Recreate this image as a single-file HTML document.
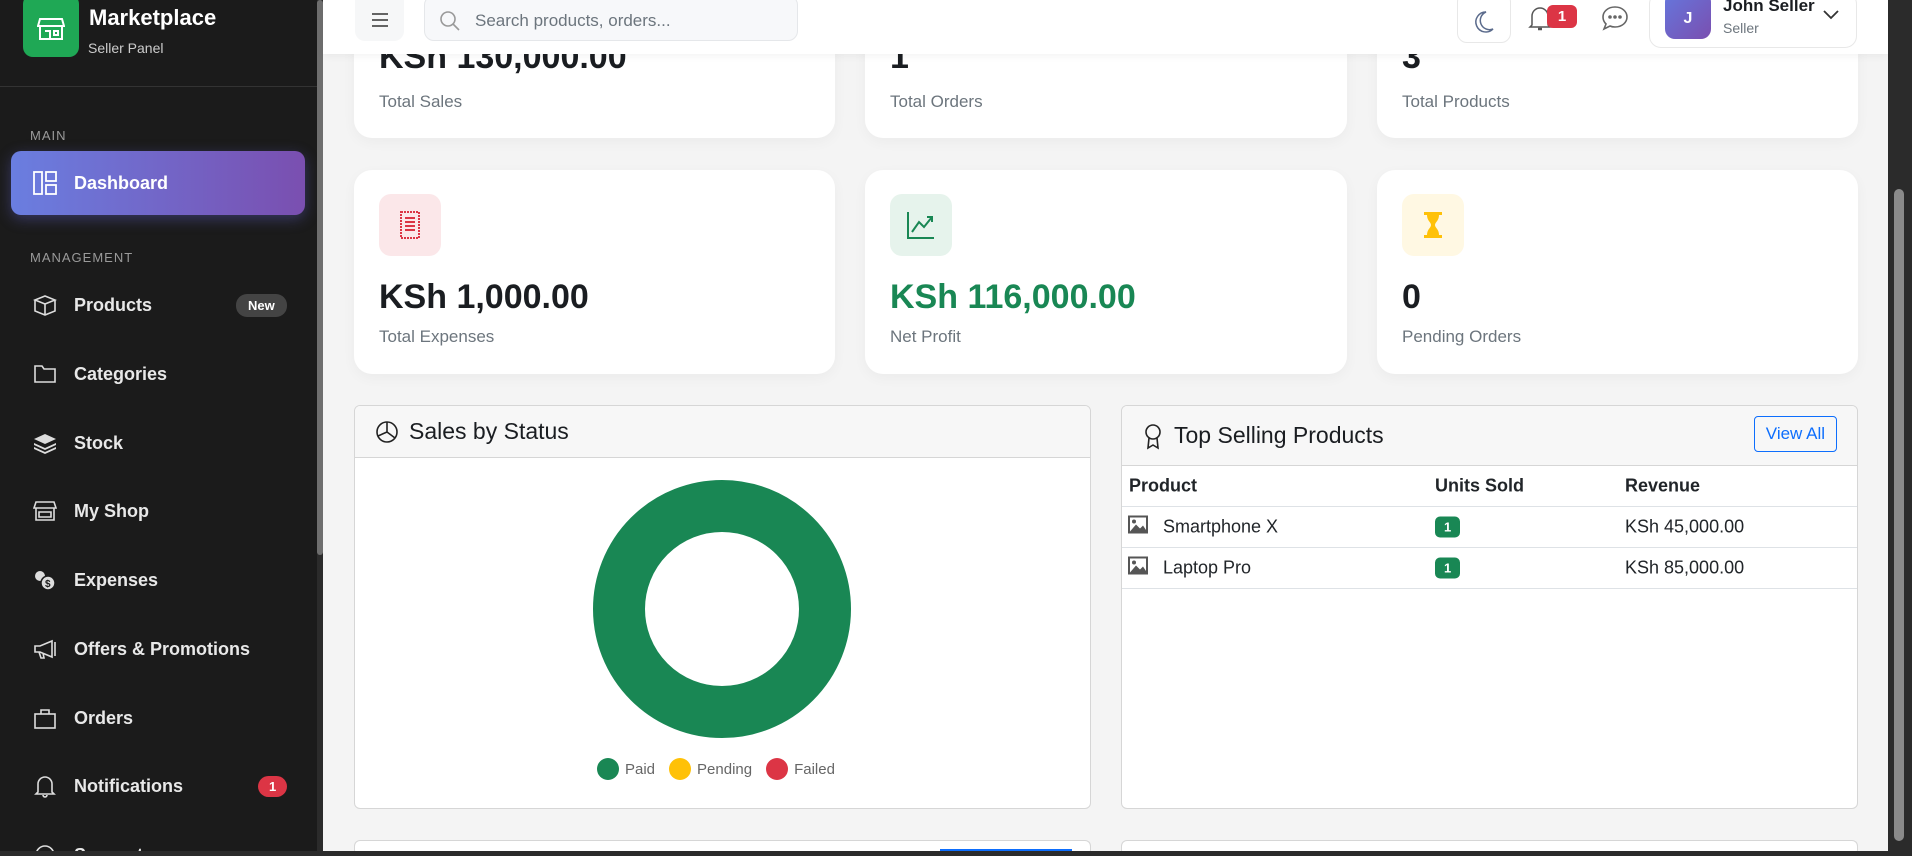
<!DOCTYPE html>
<html style="width:1912px;height:856px;overflow:hidden"><head><meta charset="utf-8"><style>
*{box-sizing:border-box;margin:0;padding:0}
body{width:1912px;height:856px;overflow:hidden;background:#f4f4f4;font-family:"Liberation Sans",sans-serif;position:relative;color:#212529}
.abs{position:absolute}
.sb{left:0;top:0;width:317px;height:856px;background:#1b1b1b;color:#fff;overflow:hidden}
.sbs{left:317px;top:0;width:6px;height:856px;background:#2b2b2b}
.sbs i{position:absolute;left:0;top:0;width:6px;height:555px;background:#6e6e6e;border-radius:3px}
.nav{position:absolute;left:0;width:317px;height:40px;display:flex;align-items:center;font-size:18px;font-weight:bold;color:#e8e8e8}
.nav svg{position:absolute;left:33px}
.nav span.t{position:absolute;left:74px}
.sec{position:absolute;left:30px;font-size:13px;letter-spacing:1px;color:#9a9a9a}
.hdr{left:323px;top:0;width:1565px;height:54px;background:#fff;box-shadow:0 2px 8px rgba(0,0,0,.05)}
.card{position:absolute;background:#fff;border-radius:18px;box-shadow:0 4px 14px rgba(0,0,0,.04)}
.val{position:absolute;left:25px;font-size:34px;font-weight:bold;color:#1a1d21}
.lbl{position:absolute;left:25px;font-size:17px;color:#6c757d}
.ib{position:absolute;left:25px;top:24px;width:62px;height:62px;border-radius:12px;display:flex;align-items:center;justify-content:center}
.panel{position:absolute;background:#fff;border:1px solid #d6d6d6;border-radius:6px;overflow:hidden}
.ph{background:#f7f7f7;border-bottom:1px solid #d6d6d6;font-size:23px;display:flex;align-items:center;padding-left:20px;color:#1a1d21}
.row{position:absolute;left:0;width:100%;border-bottom:1px solid #dee2e6;font-size:18px}
.row span{position:absolute;top:50%;transform:translateY(-50%)}
.bd{background:#198754;color:#fff;font-size:13px;font-weight:bold;padding:3px 9px;border-radius:5px}
#wrap{position:absolute;left:0;top:0;width:1912px;height:856px;overflow:hidden}
</style></head><body><div id="wrap">
<div class="abs sb">
 <div class="abs" style="left:23px;top:-6px;width:56px;height:63px;background:#1fa855;border-radius:10px;display:flex;align-items:center;justify-content:center;padding-top:6px">
  <svg width="28" height="24" viewBox="0 0 28 24" fill="none" stroke="#fff" stroke-width="2"><path d="M3 2h22l2 7H1z"/><path d="M3 9v13h22V9M3 22h22M8 14h5v8M17 14h4v4h-4z"/></svg>
 </div>
 <div class="abs" style="left:89px;top:5px;font-size:22px;font-weight:bold">Marketplace</div>
 <div class="abs" style="left:88px;top:40px;font-size:14px;color:#ccc">Seller Panel</div>
 <div class="abs" style="left:0;top:86px;width:317px;height:1px;background:#333"></div>
 <div class="sec" style="top:128px">MAIN</div>
 <div class="abs" style="left:11px;top:151px;width:294px;height:64px;border-radius:10px;background:linear-gradient(90deg,#6a7ee0,#7a4fb0);box-shadow:0 4px 14px rgba(110,110,230,.35)"></div>
 <div class="nav" style="top:163px;color:#fff"><svg width="24" height="24" viewBox="0 0 24 24" fill="none" stroke="#fff" stroke-width="1.8"><rect x="1" y="1" width="8" height="22"/><rect x="13" y="1" width="10" height="9"/><rect x="13" y="14" width="10" height="9"/></svg><span class="t">Dashboard</span></div>
 <div class="sec" style="top:250px">MANAGEMENT</div>
 <div class="nav" style="top:285px"><svg width="24" height="22" viewBox="0 0 24 22" fill="none" stroke="#ddd" stroke-width="1.6"><path d="M2 6l10-4 10 4-10 4zM2 6v11l10 4 10-4V6M12 10v11"/></svg><span class="t">Products</span><span style="position:absolute;left:236px;background:#444;color:#fff;font-size:13px;padding:4px 12px;border-radius:11px">New</span></div>
 <div class="nav" style="top:354px"><svg width="24" height="22" viewBox="0 0 24 22" fill="none" stroke="#ddd" stroke-width="1.6"><path d="M2 3h7l2 3h11v13H2z"/></svg><span class="t">Categories</span></div>
 <div class="nav" style="top:423px"><svg width="24" height="22" viewBox="0 0 24 22" fill="#ddd"><path d="M12 2l11 5-11 5L1 7z"/><path d="M1 11l11 5 11-5v2l-11 5-11-5z" /><path d="M1 15l11 5 11-5v2l-11 5-11-5z"/></svg><span class="t">Stock</span></div>
 <div class="nav" style="top:491px"><svg width="24" height="22" viewBox="0 0 24 22" fill="none" stroke="#ddd" stroke-width="1.6"><path d="M3 2h18l2 6H1zM3 8v12h18V8M6 12h12v5H6z"/></svg><span class="t">My Shop</span></div>
 <div class="nav" style="top:560px"><svg width="24" height="22" viewBox="0 0 24 22"><circle cx="7" cy="7" r="5" fill="#ddd"/><circle cx="15" cy="14" r="7" fill="#ddd" stroke="#1b1b1b" stroke-width="1.5"/><text x="12" y="18" font-size="10" fill="#1b1b1b">$</text></svg><span class="t">Expenses</span></div>
 <div class="nav" style="top:629px"><svg width="24" height="22" viewBox="0 0 24 22" fill="none" stroke="#ddd" stroke-width="1.6"><path d="M2 8h5l12-5v16L7 14H2zM6 14l2 6h3l-1-5M22 4v14"/></svg><span class="t">Offers &amp; Promotions</span></div>
 <div class="nav" style="top:698px"><svg width="24" height="22" viewBox="0 0 24 22" fill="none" stroke="#ddd" stroke-width="1.6"><rect x="2" y="7" width="20" height="14"/><path d="M8 7V3h8v4"/></svg><span class="t">Orders</span></div>
 <div class="nav" style="top:766px"><svg width="24" height="24" viewBox="0 0 24 24" fill="none" stroke="#ddd" stroke-width="1.6"><path d="M5 18V10a7 7 0 0114 0v8l2 2H3zM10 21a2 2 0 004 0"/></svg><span class="t">Notifications</span><span style="position:absolute;left:258px;background:#dc3545;color:#fff;font-size:13px;padding:3px 11px;border-radius:11px">1</span></div>
 <div class="nav" style="top:835px"><svg width="24" height="24" viewBox="0 0 24 24" fill="none" stroke="#ddd" stroke-width="1.6"><circle cx="12" cy="12" r="9"/></svg><span class="t">Support</span></div>
</div>
<div class="abs sbs"><i></i></div>

<div class="card" style="left:354px;top:-66px;width:481px;height:204px"><div class="val" style="top:104px">KSh 130,000.00</div><div class="lbl" style="top:158px">Total Sales</div></div>
<div class="card" style="left:865px;top:-66px;width:482px;height:204px"><div class="val" style="top:104px">1</div><div class="lbl" style="top:158px">Total Orders</div></div>
<div class="card" style="left:1377px;top:-66px;width:481px;height:204px"><div class="val" style="top:104px">3</div><div class="lbl" style="top:158px">Total Products</div></div>

<div class="card" style="left:354px;top:170px;width:481px;height:204px"><div class="ib" style="background:#fbe7e9"><svg width="24" height="30" viewBox="0 0 24 30" fill="none" stroke="#dc3545" stroke-width="2"><path d="M3 2h18v26H3z" stroke-dasharray="2 1"/><path d="M7 8h10M7 12h10M7 16h10M7 20h10"/></svg></div><div class="val" style="top:108px">KSh 1,000.00</div><div class="lbl" style="top:157px">Total Expenses</div></div>
<div class="card" style="left:865px;top:170px;width:482px;height:204px"><div class="ib" style="background:#e6f3ec"><svg width="30" height="30" viewBox="0 0 30 30" fill="none" stroke="#198754" stroke-width="2"><path d="M2 2v26h26"/><path d="M6 22l7-10 5 5 8-10M21 7h5v5"/></svg></div><div class="val" style="top:108px;color:#198754">KSh 116,000.00</div><div class="lbl" style="top:157px">Net Profit</div></div>
<div class="card" style="left:1377px;top:170px;width:481px;height:204px"><div class="ib" style="background:#fff8e3"><svg width="20" height="26" viewBox="0 0 20 26" fill="#ffc107"><rect x="1" y="0" width="18" height="3"/><rect x="1" y="23" width="18" height="3"/><path d="M4 3h12c0 6-4 7-4 10s4 4 4 10H4c0-6 4-7 4-10S4 9 4 3z"/></svg></div><div class="val" style="top:108px">0</div><div class="lbl" style="top:157px">Pending Orders</div></div>

<div class="panel" style="left:354px;top:405px;width:737px;height:404px">
 <div class="ph" style="height:52px"><svg width="24" height="24" viewBox="0 0 24 24" fill="none" stroke="#222" stroke-width="1.6" style="margin-right:10px"><circle cx="12" cy="12" r="10"/><path d="M12 2v10l8 6M12 12l-9 4"/></svg>Sales by Status</div>
 <svg class="abs" style="left:232px;top:68px" width="270" height="270"><circle cx="135" cy="135" r="103" fill="none" stroke="#198754" stroke-width="52"/></svg>
 <div class="abs" style="left:242px;top:352px;font-size:15px;color:#666;display:flex;align-items:center">
  <i style="width:22px;height:22px;border-radius:50%;background:#198754;margin-right:6px"></i>Paid
  <i style="width:22px;height:22px;border-radius:50%;background:#ffc107;margin:0 6px 0 14px"></i>Pending
  <i style="width:22px;height:22px;border-radius:50%;background:#dc3545;margin:0 6px 0 14px"></i>Failed
 </div>
</div>
<div class="panel" style="left:1121px;top:405px;width:737px;height:404px">
 <div class="ph" style="height:60px;position:relative"><svg width="22" height="28" viewBox="0 0 22 28" fill="none" stroke="#222" stroke-width="1.6" style="margin-right:10px"><circle cx="11" cy="10" r="7"/><path d="M7 16l-1 10 5-3 5 3-1-10"/></svg>Top Selling Products<span style="position:absolute;right:20px;top:10px;border:1px solid #0d6efd;color:#0d6efd;font-size:17px;padding:7px 11px;border-radius:4px">View All</span></div>
 <div class="row" style="top:60px;height:41px;font-weight:bold;font-size:18px"><span style="left:7px">Product</span><span style="left:313px">Units Sold</span><span style="left:503px">Revenue</span></div>
 <div class="row" style="top:101px;height:41px"><span style="left:6px"><svg width="20" height="18" viewBox="0 0 20 18"><rect x="1" y="1" width="18" height="16" fill="none" stroke="#555" stroke-width="2"/><path d="M2 16l6-7 4 4 3-3 4 6z" fill="#555"/><circle cx="6" cy="6" r="2" fill="#555"/></svg></span><span style="left:41px">Smartphone X</span><span class="bd" style="left:313px">1</span><span style="left:503px">KSh 45,000.00</span></div>
 <div class="row" style="top:142px;height:41px"><span style="left:6px"><svg width="20" height="18" viewBox="0 0 20 18"><rect x="1" y="1" width="18" height="16" fill="none" stroke="#555" stroke-width="2"/><path d="M2 16l6-7 4 4 3-3 4 6z" fill="#555"/><circle cx="6" cy="6" r="2" fill="#555"/></svg></span><span style="left:41px">Laptop Pro</span><span class="bd" style="left:313px">1</span><span style="left:503px">KSh 85,000.00</span></div>
</div>
<div class="panel" style="left:354px;top:840px;width:737px;height:16px;border-bottom:none"><div class="abs" style="left:585px;top:8px;width:132px;height:6px;background:#0d6efd"></div></div>
<div class="panel" style="left:1121px;top:840px;width:737px;height:16px;border-bottom:none"></div>

<div class="abs hdr">
 <div class="abs" style="left:32px;top:-10px;width:49px;height:51px;background:#f6f7f8;border-radius:10px;display:flex;align-items:center;justify-content:center;padding-top:8px"><svg width="18" height="14" viewBox="0 0 18 14" stroke="#333" stroke-width="1.6"><path d="M1 1h16M1 7h16M1 13h16"/></svg></div>
 <div class="abs" style="left:101px;top:-5px;width:374px;height:46px;background:#f7f8fa;border:1px solid #e5e7ea;border-radius:10px;display:flex;align-items:center;padding:5px 0 0 14px;font-size:17px;color:#6c757d"><svg width="22" height="22" viewBox="0 0 22 22" fill="none" stroke="#999" stroke-width="1.6" style="margin-right:14px"><circle cx="9" cy="9" r="7"/><path d="M14 14l6 6"/></svg>Search products, orders...</div>
 <div class="abs" style="left:1134px;top:-8px;width:54px;height:51px;border:1px solid #e8e8e8;border-radius:10px;display:flex;align-items:center;justify-content:center;padding-top:8px"><svg width="24" height="24" viewBox="0 0 24 24" fill="none" stroke="#5b6b8c" stroke-width="1.5"><path d="M14 2a10 10 0 107 17A9 9 0 0114 2z"/></svg></div>
 <svg class="abs" style="left:1204px;top:4px" width="26" height="28" viewBox="0 0 26 28" fill="none" stroke="#555" stroke-width="1.5"><path d="M5 21V12a8 8 0 0116 0v9l2 2H3z"/><path d="M11 25h4" stroke-width="2.5"/></svg>
 <div class="abs" style="left:1224px;top:5px;width:30px;height:23px;background:#dc3545;border-radius:6px;color:#fff;font-size:15px;font-weight:bold;text-align:center;line-height:23px">1</div>
 <svg class="abs" style="left:1278px;top:5px" width="28" height="26" viewBox="0 0 28 26" fill="none" stroke="#666" stroke-width="1.6"><path d="M14 2c7 0 12 4.5 12 10s-5 10-12 10c-2 0-3 0-5-1l-6 3 2-5c-2-2-3-4-3-7C2 6.5 7 2 14 2z"/><circle cx="9" cy="12" r="1" fill="#666"/><circle cx="14" cy="12" r="1" fill="#666"/><circle cx="19" cy="12" r="1" fill="#666"/></svg>
 <div class="abs" style="left:1326px;top:-8px;width:208px;height:56px;border:1px solid #e8e8e8;border-radius:12px"></div>
 <div class="abs" style="left:1342px;top:-8px;width:46px;height:47px;border-radius:10px;background:linear-gradient(135deg,#6577dd,#7a4fb0);color:#fff;font-weight:bold;font-size:16px;display:flex;align-items:center;justify-content:center;padding-top:6px">J</div>
 <div class="abs" style="left:1400px;top:-4px;font-size:17px;font-weight:bold;color:#1a1d21">John Seller</div>
 <div class="abs" style="left:1400px;top:20px;font-size:14px;color:#6c757d">Seller</div>
 <svg class="abs" style="left:1500px;top:10px" width="16" height="10" viewBox="0 0 16 10" fill="none" stroke="#333" stroke-width="1.8"><path d="M1 1l7 7 7-7"/></svg>
</div>
<div class="abs" style="left:1888px;top:0;width:24px;height:856px;background:#2b2b2b"><div style="position:absolute;left:6px;top:189px;width:10px;height:652px;background:#8a8a8a;border-radius:5px"></div></div>
<div class="abs" style="left:0;top:851px;width:1912px;height:5px;background:#2b2b2b"></div>
</div></body></html>
